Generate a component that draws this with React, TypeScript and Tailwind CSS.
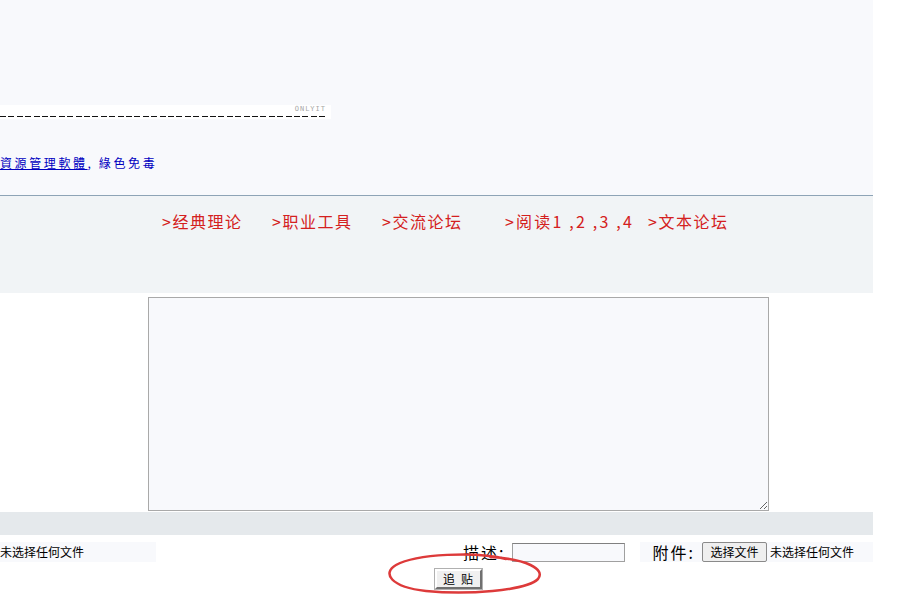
const CJK = { fontFamily: "'Noto Sans CJK SC', 'Liberation Sans', sans-serif" }

const LINKS = [
  { label: '>经典理论', w: 'w-[110px] tracking-[1.5px]' },
  { label: '>职业工具', w: 'w-[110px] tracking-[1.5px]' },
  { label: '>交流论坛', w: 'w-[123px] tracking-[1.5px]' },
  { label: '>阅读1 ,2 ,3 ,4', w: 'w-[143px] tracking-[2.2px]' },
  { label: '>文本论坛', w: 'w-auto tracking-[1.5px]' },
]

export default function App() {
  return (
    <div className="min-h-[610px] bg-white text-black" style={CJK}>
      {/* top block */}
      <div className="w-[873px] h-[195px] bg-[#f8f9fc] pt-[105px]">
        <div className="w-[331px] h-[14px] bg-white flex flex-col">
          <div className="text-right pr-[5px] text-[7px] leading-[8px] text-[#a8a8a8] tracking-[1px]" style={{ fontFamily: "'DejaVu Sans Mono', monospace" }}>
            ONLYIT
          </div>
          <div className="mt-[3px] w-[328px] h-px bg-[repeating-linear-gradient(to_right,#111_0_6px,transparent_6px_8.4px)]" />
        </div>
        <div className="mt-[37px] text-[12px] leading-[14px] tracking-[2.6px] text-[#0000c0]">
          <a href="#" className="underline">資源管理軟體</a>, 綠色免毒
        </div>
      </div>
      <div className="w-[873px] h-px bg-[#8ea4b6]" />

      {/* nav links */}
      <div className="w-[873px] h-[97px] bg-[#f1f4f6] pt-[15px] pl-[162px] flex items-start">
        {LINKS.map(l => (
          <span key={l.label} className={`${l.w} text-[16px] leading-[20px] text-[#d42020] whitespace-pre`}>
            {l.label}
          </span>
        ))}
      </div>

      {/* textarea */}
      <div className="w-[873px] h-[219px] bg-white pt-[4px] pl-[148px]">
        <textarea className="block w-[621px] h-[214px] border border-[#a9a9a9] bg-[#f8f9fc] outline-none" />
      </div>
      <div className="w-[873px] h-[23px] bg-[#e5e9ec]" />

      {/* attachment row */}
      <div className="w-[873px] mt-[7px] h-[20px] flex items-center">
        <div className="w-[156px] h-[20px] bg-[#f8f9fc] text-[12px] leading-[20px]">未选择任何文件</div>
        <div className="ml-[307px] text-[16px] leading-[20px] tracking-[2px]">描述:</div>
        <input className="ml-[7px] w-[113px] h-[19px] border border-[#a0a0a0] border-t-[#808080] bg-[#f8f9fc] outline-none" />
        <div className="ml-[15px] flex-1 h-[20px] bg-[#f8f9fc] flex items-center pl-[12px]">
          <span className="text-[16px] leading-[20px] tracking-[2px]">附件:</span>
          <button className="ml-[7px] h-[20px] w-[65px] border border-[#8a8a8a] rounded-[2px] bg-[#efefef] text-[12px] leading-[18px]">
            选择文件
          </button>
          <span className="ml-[3px] text-[12px] leading-[20px]">未选择任何文件</span>
        </div>
      </div>

      {/* submit */}
      <div className="relative w-[873px] mt-[3px] pl-[435px]">
        <button className="w-[47px] h-[20px] bg-[#f0f0f0] border-2 border-t-white border-l-white border-r-[#707070] border-b-[#707070] outline outline-1 outline-[#b0b0b0] text-[12px] leading-[14px] tracking-[6px] pl-[5px]">
          追贴
        </button>
        <svg className="absolute left-[386px] top-[-12px] pointer-events-none" width="156" height="42" viewBox="0 0 156 42">
          <path
            d="M 120 6 C 90 -2, 30 1, 10 12 C -4 20, 4 34, 40 38 C 80 42, 140 38, 152 26 C 160 16, 140 6, 104 4"
            fill="none"
            stroke="#dd3a3a"
            strokeWidth="2.5"
            strokeLinecap="round"
          />
        </svg>
      </div>
    </div>
  )
}
